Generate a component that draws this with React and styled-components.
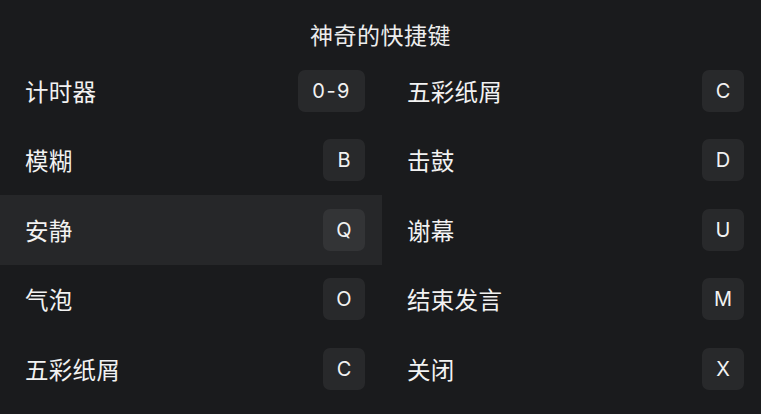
import styled, { createGlobalStyle } from "styled-components"

const GlobalStyle = createGlobalStyle`
  html, body {
    margin: 0;
    padding: 0;
    background: #1a1b1d;
  }
  body {
    width: 761px;
    height: 414px;
    overflow: hidden;
    font-family: "Noto Sans CJK SC", "Noto Sans", sans-serif;
    color: #f2f2f2;
  }
`

const Container = styled.div`
  width: 761px;
  height: 414px;
  background: #1a1b1d;
`

const Title = styled.h1`
  margin: 0;
  padding-top: 12px;
  height: 56px;
  line-height: 44px;
  box-sizing: border-box;
  text-align: center;
  font-size: 23px;
  font-weight: 400;
  letter-spacing: 0.5px;
  color: #ededed;
`

const Grid = styled.div`
  display: grid;
  grid-template-columns: 382px 1fr;
`

const Column = styled.div`
  display: flex;
  flex-direction: column;
`

const Row = styled.div`
  display: flex;
  align-items: center;
  justify-content: space-between;
  height: 69.5px;
  padding: 0 17px 0 25px;
  background: ${(p) => (p.$active ? "#262729" : "transparent")};
`

const Label = styled.span`
  font-size: 23.5px;
  letter-spacing: 0.3px;
  color: #f2f2f2;
`

const Key = styled.span`
  display: flex;
  align-items: center;
  justify-content: center;
  min-width: 42px;
  height: 42px;
  padding: 0 ${(p) => (p.$wide ? "14px" : "0")};
  box-sizing: border-box;
  border-radius: 7px;
  background: ${(p) => (p.$active ? "#333436" : "#28292b")};
  font-family: Inter, "Noto Sans", sans-serif;
  font-size: 20px;
  letter-spacing: ${(p) => (p.$wide ? "1.5px" : "0")};
  color: #f2f2f2;
`

const left = [
  { label: "计时器", key: "0-9" },
  { label: "模糊", key: "B" },
  { label: "安静", key: "Q", active: true },
  { label: "气泡", key: "O" },
  { label: "五彩纸屑", key: "C" },
]

const right = [
  { label: "五彩纸屑", key: "C" },
  { label: "击鼓", key: "D" },
  { label: "谢幕", key: "U" },
  { label: "结束发言", key: "M" },
  { label: "关闭", key: "X" },
]

const ShortcutColumn = ({ items }) => (
  <Column>
    {items.map((item) => (
      <Row key={item.label + item.key} $active={item.active}>
        <Label>{item.label}</Label>
        <Key $active={item.active} $wide={item.key.length > 1}>
          {item.key}
        </Key>
      </Row>
    ))}
  </Column>
)

const App = () => {
  return (
    <Container>
      <GlobalStyle />
      <Title>神奇的快捷键</Title>
      <Grid>
        <ShortcutColumn items={left} />
        <ShortcutColumn items={right} />
      </Grid>
    </Container>
  )
}

export default App
